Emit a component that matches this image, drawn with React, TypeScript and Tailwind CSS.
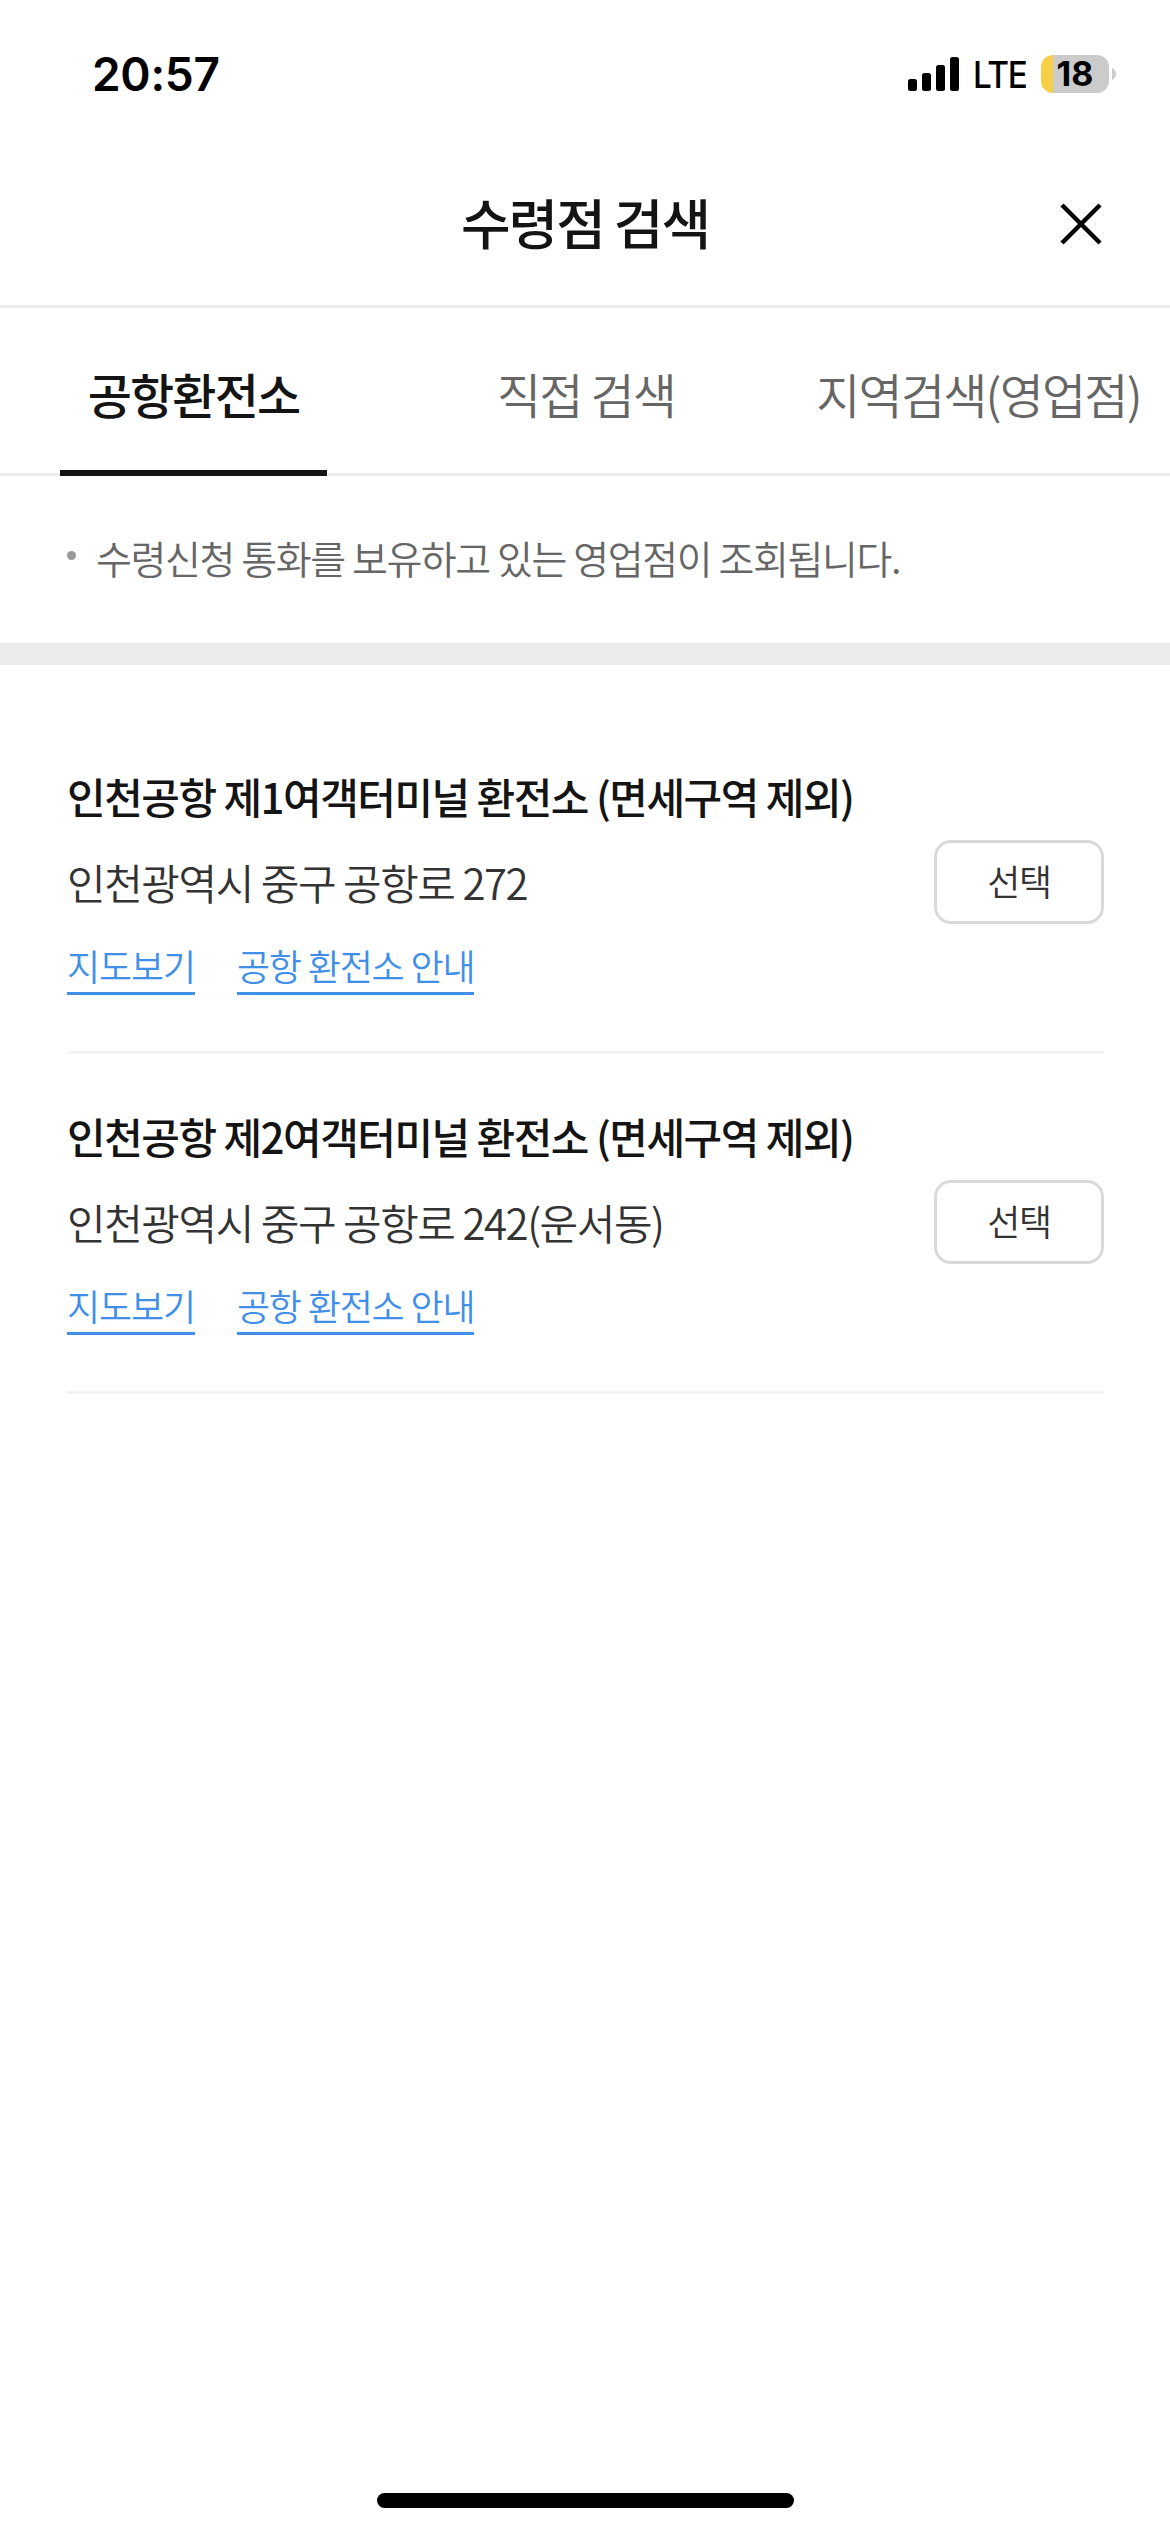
import clsx from 'clsx';
import { useState } from 'react';

type Office = {
  id: number;
  name: string;
  address: string;
};

const TABS = ['공항환전소', '직접 검색', '지역검색(영업점)'];

const OFFICES: Office[] = [
  {
    id: 1,
    name: '인천공항 제1여객터미널 환전소 (면세구역 제외)',
    address: '인천광역시 중구 공항로 272',
  },
  {
    id: 2,
    name: '인천공항 제2여객터미널 환전소 (면세구역 제외)',
    address: '인천광역시 중구 공항로 242(운서동)',
  },
];

function StatusBar() {
  return (
    <div className="flex h-[141px] shrink-0 items-start justify-between pl-[92px] pr-[54px] pt-[55px] font-['Inter',sans-serif] text-black">
      <span className="text-[46px] font-semibold leading-[39px] tracking-[-0.3px]">
        20:57
      </span>
      <div className="flex h-[38px] items-center">
        <svg width="51" height="34" viewBox="0 0 51 34" className="mr-[14px]">
          <rect x="0" y="22" width="9" height="12" rx="2.5" />
          <rect x="14" y="16" width="9" height="18" rx="2.5" />
          <rect x="28" y="8" width="9" height="26" rx="2.5" />
          <rect x="42" y="0" width="9" height="34" rx="2.5" />
        </svg>
        <span className="w-[68px] origin-left scale-x-90 pt-[2px] text-[37px] font-medium leading-[38px] tracking-[-1.5px]">
          LTE
        </span>
        <div className="flex h-[38px] w-[68px] items-center justify-center rounded-[12px] bg-[linear-gradient(to_right,#f7ce46_12px,#cbcbcb_12px)] text-[34px] font-bold leading-[48px]">
          18
        </div>
        <svg width="4" height="12" viewBox="0 0 4 12" className="ml-[3px]">
          <path d="M0 0C2.5 1.2 4 3.4 4 6s-1.500 4.800-4 6z" fill="#cbcbcb" />
        </svg>
      </div>
    </div>
  );
}

function Header() {
  return (
    <header className="grid h-[167px] shrink-0 grid-cols-[1fr_auto_1fr] items-center border-b-3 border-[#ececec] pb-[3px]">
      <h1 className="col-start-2 text-[54px] font-medium leading-[80px] tracking-[-0.038em] text-[#141414]">
        수령점 검색
      </h1>
      <button
        type="button"
        aria-label="닫기"
        className="mr-[68px] mt-[5px] justify-self-end"
      >
        <svg width="42" height="42" viewBox="0 0 42 42" className="block">
          <path d="M2 2l38 38M40 2L2 40" stroke="#000" strokeWidth="4.500" />
        </svg>
      </button>
    </header>
  );
}

function OfficeRow({ office }: { office: Office }) {
  return (
    <li className="flex h-[340px] items-start justify-between border-b-3 border-[#f3f3f3] pt-[50px]">
      <div>
        <h2 className="text-[42px] font-medium leading-[64px] tracking-[-0.036em] text-[#141414]">
          {office.name}
        </h2>
        <p className="mt-[22px] text-[42px] leading-[64px] tracking-[-0.035em] text-[#333]">
          {office.address}
        </p>
        <div className="mt-[24px] flex gap-[42px] text-[36px] leading-[54px] tracking-[-0.032em] text-[#418fe8]">
          <a className="border-b-3 border-[#418fe8]">지도보기</a>
          <a className="border-b-3 border-[#418fe8]">공항 환전소 안내</a>
        </div>
      </div>
      <button
        type="button"
        className="mt-[76px] h-[84px] w-[170px] shrink-0 rounded-[17px] border-3 border-[#d9d9d9] pb-[4px] text-[36px] leading-[54px] tracking-[-0.035em] text-[#333]"
      >
        선택
      </button>
    </li>
  );
}

export default function App() {
  const [active, setActive] = useState(0);

  return (
    <div className="flex h-[2532px] w-[1170px] flex-col overflow-hidden bg-white font-['Noto_Sans_CJK_KR',sans-serif] font-[350] whitespace-nowrap">
      <StatusBar />
      <Header />

      <nav className="grid h-[168px] shrink-0 grid-cols-[387px_398px_387px] justify-items-center border-b-3 border-[#ececec]">
        {TABS.map((tab, i) => (
          <button
            key={tab}
            type="button"
            onClick={() => setActive(i)}
            className={clsx(
              '-mb-[3px] h-[168px] border-b-6 px-[28px] pt-[8px] text-[48px] leading-[70px] tracking-[-0.038em]',
              i === active
                ? 'border-[#141414] font-medium text-[#141414]'
                : 'border-transparent text-[#666]',
            )}
          >
            {tab}
          </button>
        ))}
      </nav>

      <div className="flex h-[167px] shrink-0 items-start pl-[67px] pt-[52px]">
        <span className="mt-[23px] size-[9px] rounded-full bg-[#999]" />
        <p className="ml-[20px] text-[39px] leading-[58px] tracking-[-0.036em] text-[#666]">
          수령신청 통화를 보유하고 있는 영업점이 조회됩니다.
        </p>
      </div>

      <div className="h-[22px] shrink-0 bg-[#ebecee]" />

      <ul className="grow pl-[67px] pr-[66px] pt-[49px]">
        {OFFICES.map((office) => (
          <OfficeRow key={office.id} office={office} />
        ))}
      </ul>

      {/* Home indicator */}
      <div className="mb-[24px] ml-[377px] h-[15px] w-[417px] shrink-0 rounded-full bg-black" />
    </div>
  );
}
